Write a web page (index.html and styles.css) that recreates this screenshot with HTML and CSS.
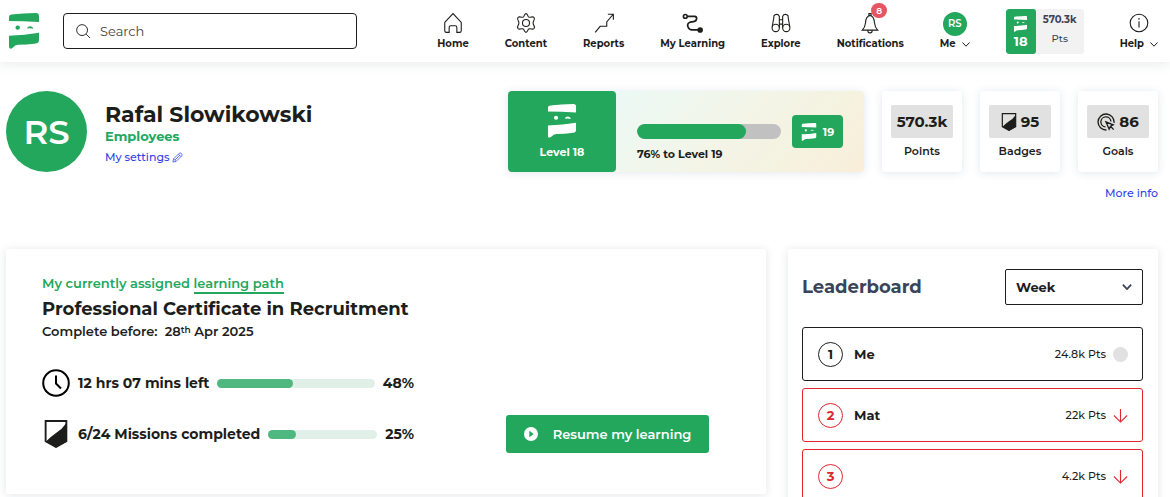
FILE: index.html
```html
<!DOCTYPE html>
<html lang="en">
<head>
<meta charset="utf-8">
<meta name="viewport" content="width=device-width, initial-scale=1">
<title>Learning dashboard</title>
<link rel="stylesheet" href="styles.css">
</head>
<body>
<svg class="defs" aria-hidden="true">
  <symbol id="face" viewBox="0 0 30 36">
    <path d="M0 8V4Q0 1.800 2.500 1.500Q14 .2 27 .1Q30 .1 30 3V9Q14 8 0 8Z"/>
    <circle cx="8.700" cy="14.600" r="2.200"/>
    <path d="M18 15.600Q18.500 13.300 21.300 13.300Q24 13.400 24.300 15.800Q21 14.800 18 15.600Z"/>
    <path d="M0 22.700Q16 22.200 30 19.800V27Q30 30 27 30.500Q18 31.800 9 31.800Q6 32 4 34.500Q0 37.500 0 33Z"/>
  </symbol>
  <symbol id="shield" viewBox="0 0 22 27">
    <path d="M1 1H21V20.500L11 26L1 20.500Z" fill="none" stroke="currentColor" stroke-width="1.800"/>
    <path d="M21 3V21L11 26.500L1 21Q6 16 11 12.500Q17 9 21 3Z" fill="currentColor"/>
  </symbol>
  <symbol id="chevron" viewBox="0 0 8 5">
    <path d="M.5 .5L4 4.200L7.500 .5" fill="none" stroke="currentColor"/>
  </symbol>
  <symbol id="down" viewBox="0 0 16 16">
    <path d="M8 1V15M1 8L8 15L15 8" fill="none" stroke="currentColor" stroke-width="1.200"/>
  </symbol>
</svg>

<header class="topbar">
  <a class="logo" href="#" aria-label="Home page"><svg viewBox="0 0 30 36"><use href="#face"/></svg></a>
  <label class="search">
    <svg viewBox="0 0 16 16"><circle cx="6.500" cy="6.500" r="5.800"/><path d="M10.800 10.800L15 15"/></svg>
    <input type="search" placeholder="Search" aria-label="Search">
  </label>
  <nav class="nav">
    <a class="nav-item" href="#">
      <svg class="nav-icon" viewBox="0 0 20 20"><path d="M2.500 9.500L10 1.500L17.500 9.500V17Q17.500 18.500 16 18.500H13.500V14Q13.500 12.500 12 12.500H8Q6.500 12.500 6.500 14V18.500H4Q2.500 18.500 2.500 17Z"/></svg>
      <span>Home</span>
    </a>
    <a class="nav-item" href="#">
      <svg class="nav-icon" viewBox="0 0 20 20"><path d="M10 1.500Q11 1.500 12 4Q12.500 5 14 4.700Q16.500 4 17.300 5Q18.300 6.500 16.800 8.500Q16 10 16.800 11.500Q18.300 13.500 17.300 15Q16.500 16 14 15.300Q12.500 15 12 16Q11 18.500 10 18.500Q9 18.500 8 16Q7.500 15 6 15.300Q3.500 16 2.700 15Q1.700 13.500 3.200 11.500Q4 10 3.200 8.500Q1.700 6.500 2.700 5Q3.500 4 6 4.700Q7.500 5 8 4Q9 1.500 10 1.500Z"/><circle cx="10" cy="10" r="3.200"/></svg>
      <span>Content</span>
    </a>
    <a class="nav-item" href="#">
      <svg class="nav-icon" viewBox="0 0 20 20"><path d="M2 18.500L6.500 13H12.500V9L18 2.500M13.500 2H18.500V7"/></svg>
      <span>Reports</span>
    </a>
    <a class="nav-item" href="#">
      <svg class="nav-icon nav-icon-bold" viewBox="0 0 20 20"><circle cx="3" cy="4" r="1.700"/><path d="M5 4H11.500Q13.500 4.300 13.300 6Q13 8.500 10.500 8.700Q7 9 6 10Q4.500 11.500 5.500 13.700Q6.500 16.300 9 16.300H15"/><circle class="filled" cx="16.500" cy="16.300" r="1.800"/></svg>
      <span>My Learning</span>
    </a>
    <a class="nav-item" href="#">
      <svg class="nav-icon" viewBox="0 0 20 20"><path d="M2 13.500L3.500 5V3.500Q5 1.500 7.500 2.500L8.500 4V14M18 13.500L16.500 5V3.500Q15 1.500 12.500 2.500L11.500 4V14M8.500 7H11.500M8.500 11H11.500"/><circle cx="5.200" cy="14.500" r="3.300"/><circle cx="14.800" cy="14.500" r="3.300"/></svg>
      <span>Explore</span>
    </a>
    <a class="nav-item" href="#">
      <span class="bell">
        <svg class="nav-icon" viewBox="0 0 20 20"><path d="M3 16.500Q5.500 14 6 9.500Q6.200 4 10 3.200Q13.800 4 14 9.500Q14.500 14 17 16.500ZM8 16.500Q8 19 10 19Q12 19 12 16.500M9 3.200V1.500H11V3.200"/></svg>
        <span class="count">8</span>
      </span>
      <span>Notifications</span>
    </a>
    <button class="nav-item" type="button">
      <span class="avatar avatar-small">RS</span>
      <span class="with-chevron">Me <svg class="chevron"><use href="#chevron"/></svg></span>
    </button>
    <a class="score" href="#">
      <span class="score-level"><svg viewBox="0 0 30 36"><use href="#face"/></svg>18</span>
      <span class="score-points"><strong>570.3k</strong><span>Pts</span></span>
    </a>
    <button class="nav-item" type="button">
      <svg class="nav-icon" viewBox="0 0 20 20"><circle cx="10" cy="10" r="8"/><path d="M10 8.500V14M10 5.500V7"/></svg>
      <span class="with-chevron">Help <svg class="chevron"><use href="#chevron"/></svg></span>
    </button>
  </nav>
</header>

<main class="page">
  <section class="profile">
    <span class="avatar avatar-large">RS</span>
    <div class="identity">
      <h1>Rafal Slowikowski</h1>
      <p class="group">Employees</p>
      <a class="link" href="#">My settings
        <svg class="pencil" viewBox="0 0 12 12"><path d="M1 11L1.700 7.500L7.800 1.400Q9 .5 10.300 1.700Q11.500 3 10.600 4.200L4.500 10.300ZM7 2.300L9.700 5M1.700 7.500L4.500 10.300M3.200 8.800L8.400 3.600"/></svg>
      </a>
    </div>
    <div class="level">
      <div class="level-badge"><svg viewBox="0 0 30 36"><use href="#face"/></svg>Level 18</div>
      <div class="level-progress">
        <div class="level-meter">
          <div class="track"><div class="bar" style="width:76%"></div></div>
          <p>76% to Level 19</p>
        </div>
        <div class="next-level"><svg viewBox="0 0 30 36"><use href="#face"/></svg>19</div>
      </div>
    </div>
    <div class="stat"><div class="stat-value">570.3k</div><span>Points</span></div>
    <div class="stat"><div class="stat-value"><svg class="stat-shield"><use href="#shield"/></svg>95</div><span>Badges</span></div>
    <div class="stat"><div class="stat-value"><svg class="stat-goal" viewBox="0 0 20 20"><path d="M10.500 18.900A8.900 8.900 0 1 1 18.900 11M9.500 15.500A5.600 5.600 0 1 1 15.500 9.500"/><path d="M10 10L18 13.200L15 14.700L13.500 18ZM15 14.700L18.500 18.500"/></svg>86</div><span>Goals</span></div>
  </section>
  <div class="more"><a class="link" href="#">More info</a></div>

  <div class="panels">
    <section class="panel path">
      <p class="path-label">My currently assigned <a href="#">learning path</a></p>
      <h2>Professional Certificate in Recruitment</h2>
      <p class="deadline">Complete before:&nbsp; 28<sup>th</sup> Apr 2025</p>
      <div class="path-body">
        <div class="metrics">
          <div class="metric">
            <svg class="metric-icon" viewBox="0 0 28 28"><circle cx="14" cy="14" r="12.800"/><path d="M14 6.500V14.500L19 19.500"/></svg>
            <span>12 hrs 07 mins left</span>
            <div class="mini-track"><div class="mini-bar" style="width:48%"></div></div>
            <span>48%</span>
          </div>
          <div class="metric">
            <svg class="metric-icon metric-shield"><use href="#shield"/></svg>
            <span>6/24 Missions completed</span>
            <div class="mini-track"><div class="mini-bar" style="width:25%"></div></div>
            <span>25%</span>
          </div>
        </div>
        <button class="resume" type="button">
          <svg viewBox="0 0 14 14"><circle cx="7" cy="7" r="7" fill="#fff"/><path d="M5.300 3.800L9.700 7L5.300 10.200Z" fill="#22a75d"/></svg>
          Resume my learning
        </button>
      </div>
    </section>

    <section class="panel board">
      <div class="board-head">
        <h2>Leaderboard</h2>
        <div class="period">
          <select aria-label="Period"><option>Week</option><option>Month</option></select>
          <svg viewBox="0 0 8 5"><use href="#chevron"/></svg>
        </div>
      </div>
      <ol class="ranks">
        <li class="rank"><span class="place">1</span><strong>Me</strong><span class="points">24.8k Pts</span><span class="steady"></span></li>
        <li class="rank falling"><span class="place">2</span><strong>Mat</strong><span class="points">22k Pts</span><svg class="trend"><use href="#down"/></svg></li>
        <li class="rank falling"><span class="place">3</span><span class="points">4.2k Pts</span><svg class="trend"><use href="#down"/></svg></li>
      </ol>
    </section>
  </div>
</main>
</body>
</html>
```
FILE: styles.css
```css
* { box-sizing: border-box; }

:root {
  --green: #22a75d;
  --ink: #1d1d1b;
  --slate: #3a4458;
  --red: #e0262d;
  --link: #2f42ea;
}

html { overflow: hidden; }

body {
  margin: 0;
  background: #fff;
  color: var(--ink);
  font-family: Montserrat, Inter, sans-serif;
  font-size: 13px;
}

h1, h2, p, ol { margin: 0; padding: 0; }
a { color: inherit; text-decoration: none; }
button, input, select { font: inherit; color: inherit; }
svg { flex: none; }
.defs { display: none; }

.topbar {
  display: flex;
  align-items: center;
  height: 62px;
  padding: 0 12px 0 9px;
  box-shadow: 0 3px 10px rgba(60, 80, 80, .1);
}
.logo { display: flex; margin-right: 24px; color: var(--green); }
.logo svg { width: 30px; height: 36px; fill: currentColor; }

.search {
  display: flex;
  align-items: center;
  gap: 9px;
  flex: 0 1 294px;
  height: 36px;
  padding: 0 12px;
  border: 1px solid var(--ink);
  border-radius: 4px;
}
.search svg { width: 15px; height: 15px; fill: none; stroke: var(--ink); }
.search input {
  flex: 1;
  min-width: 0;
  padding: 0;
  border: 0;
  outline: 0;
  background: none;
}
.search input::placeholder { color: #444; opacity: 1; }

.nav {
  display: flex;
  align-items: center;
  gap: 36px;
  margin-left: auto;
}
.nav-item {
  display: flex;
  flex-direction: column;
  align-items: center;
  justify-content: space-between;
  height: 38px;
  padding: 0;
  border: 0;
  background: none;
  font-size: 10px;
  font-weight: 700;
  line-height: 12px;
  white-space: nowrap;
}
.nav-icon { display: block; width: 22px; height: 22px; fill: none; stroke: var(--ink); }
.nav-icon-bold { stroke-width: 1.5; }
.nav-icon .filled { fill: var(--ink); }
.bell { position: relative; }
.count {
  position: absolute;
  top: -9px;
  left: 12px;
  width: 16px;
  height: 15px;
  border-radius: 8px;
  background: #e55563;
  color: #fff;
  font-size: 9px;
  font-weight: 600;
  line-height: 15px;
  text-align: center;
}
.with-chevron { display: flex; align-items: center; gap: 6px; }
.chevron { width: 8px; height: 5px; }

.avatar {
  display: flex;
  align-items: center;
  justify-content: center;
  flex: none;
  border-radius: 50%;
  background: var(--green);
  color: #fff;
  font-weight: 600;
}
.avatar-small { width: 24px; height: 24px; font-size: 10px; }
.avatar-large { width: 81px; height: 81px; font-size: 34px; }

.score { display: flex; height: 45px; border-radius: 3px; background: #f2f2f2; overflow: hidden; }
.score-level {
  display: flex;
  flex-direction: column;
  align-items: center;
  gap: 1px;
  width: 30px;
  padding-top: 7px;
  border-radius: 3px;
  background: var(--green);
  color: #fff;
  font-weight: 700;
  line-height: 16px;
}
.score-level svg { width: 15px; height: 16px; fill: #fff; }
.score-points {
  display: flex;
  flex-direction: column;
  align-items: center;
  gap: 7px;
  width: 48px;
  padding-top: 5px;
  color: var(--slate);
  font-size: 10px;
  font-weight: 500;
  line-height: 12px;
}

.page { padding: 29px 12px 0 6px; }

.profile { display: flex; gap: 18px; }
.identity { flex: 1; padding-top: 10px; white-space: nowrap; }
.identity h1 { font-size: 22px; font-weight: 700; line-height: 27px; }
.group { color: var(--green); font-weight: 700; line-height: 17px; }
.link { color: var(--link); font-size: 11px; font-weight: 500; }
.identity .link { display: flex; align-items: center; gap: 3px; line-height: 24px; }
.pencil { width: 11px; height: 11px; fill: none; stroke: currentColor; stroke-width: .8; }

.level {
  display: flex;
  flex: 0 1 356px;
  border-radius: 4px;
  box-shadow: 0 1px 8px rgba(60, 80, 130, .14);
  font-size: 11px;
  font-weight: 700;
}
.level-badge {
  display: flex;
  flex-direction: column;
  align-items: center;
  gap: 6px;
  width: 108px;
  padding-top: 13px;
  border-radius: 4px;
  background: var(--green);
  color: #fff;
  line-height: 16px;
}
.level-badge svg { width: 30px; height: 34px; fill: #fff; }
.level-progress {
  display: flex;
  align-items: center;
  gap: 11px;
  flex: 1;
  padding: 0 21px;
  border-radius: 4px;
  background: linear-gradient(135deg, #ebf9f5, #f3f5e8 45%, #f5f2df 75%, #f9eed9);
}
.level-meter { flex: 1; padding-top: 22px; }
.track { height: 15px; border-radius: 8px; background: #c1c1c1; overflow: hidden; }
.bar { height: 100%; border-radius: 8px; background: var(--green); }
.level-meter p { margin-top: 8px; line-height: 14px; }
.next-level {
  display: flex;
  align-items: center;
  justify-content: center;
  gap: 6px;
  width: 51px;
  height: 33px;
  border-radius: 4px;
  background: var(--green);
  color: #fff;
}
.next-level svg { width: 16px; height: 18px; fill: #fff; }

.stat {
  flex: 0 0 80px;
  padding: 14px 9px 0;
  border-radius: 4px;
  box-shadow: 0 1px 8px rgba(60, 80, 130, .14);
  font-size: 11px;
  font-weight: 600;
  line-height: 26px;
  text-align: center;
}
.stat-value {
  display: flex;
  align-items: center;
  justify-content: center;
  gap: 4px;
  height: 33px;
  border-radius: 2px;
  background: #e1e1e1;
  font-size: 15px;
  font-weight: 700;
}
.stat-shield { width: 16px; height: 18px; }
.stat-goal { width: 18px; height: 18px; fill: none; stroke: var(--ink); stroke-width: 1.5; }
.more { display: flex; justify-content: flex-end; line-height: 16px; padding-top: 13px; }

.panels {
  display: grid;
  grid-template-columns: 760fr 370fr;
  gap: 22px;
  align-items: start;
  margin-top: 48px;
}
.panel { box-shadow: 0 1px 8px rgba(60, 70, 100, .14); border-radius: 2px; background: #fff; }
.path { padding: 24px 36px 41px; }
.path-label { color: var(--green); font-weight: 600; line-height: 20px; }
.path-label a { border-bottom: 2px solid; padding-bottom: 1px; }
.path h2 { font-size: 18px; font-weight: 700; line-height: 32px; }
.deadline { font-size: 13px; font-weight: 600; line-height: 12px; }
.deadline sup { font-size: 9px; line-height: 0; vertical-align: 3px; }
.path-body { display: flex; justify-content: space-between; align-items: flex-end; padding: 32px 21px 0 0; }
.metrics {
  display: flex;
  flex-direction: column;
  gap: 23px;
  flex: 0 1 372px;
  padding-bottom: 5px;
}
.metric {
  display: flex;
  align-items: center;
  gap: 8px;
  height: 28px;
  font-size: 14px;
  font-weight: 700;
  white-space: nowrap;
}
.metric-icon { width: 28px; height: 28px; fill: none; stroke: #000; stroke-width: 2; }
.metric-shield { stroke: none; }
.mini-track { flex: 1; height: 9px; border-radius: 5px; background: #e0f0e8; }
.mini-bar { height: 100%; border-radius: 5px; background: #4fb880; }
.resume {
  display: flex;
  align-items: center;
  justify-content: center;
  gap: 15px;
  width: 203px;
  height: 38px;
  padding: 0;
  border: 0;
  border-radius: 3px;
  background: var(--green);
  color: #fff;
  font-weight: 600;
}
.resume svg { width: 14px; height: 14px; }

.board { padding: 20px 15px 20px 14px; }
.board-head { display: flex; align-items: center; justify-content: space-between; margin-bottom: 22px; }
.board h2 { color: var(--slate); font-size: 18px; font-weight: 700; }
.period { display: grid; align-items: center; width: 138px; }
.period select {
  grid-area: 1 / 1;
  appearance: none;
  height: 36px;
  padding: 0 10px;
  border: 1px solid var(--ink);
  border-radius: 2px;
  background: #fff;
  font-weight: 700;
}
.period svg {
  grid-area: 1 / 1;
  justify-self: end;
  width: 10px;
  height: 6px;
  margin-right: 11px;
  color: var(--slate);
  stroke-width: 1.5;
  pointer-events: none;
}
.ranks { display: flex; flex-direction: column; gap: 7px; list-style: none; }
.rank {
  display: flex;
  align-items: center;
  gap: 7px;
  height: 54px;
  padding: 0 14px 0 15px;
  border: 1px solid var(--ink);
  border-radius: 3px;
}
.falling { border-color: var(--red); }
.place {
  display: flex;
  align-items: center;
  justify-content: center;
  width: 25px;
  height: 25px;
  margin-right: 4px;
  border: 1px solid;
  border-radius: 50%;
  font-weight: 700;
}
.falling .place { color: var(--red); }
.points { margin-left: auto; font-size: 11px; font-weight: 500; }
.steady { width: 15px; height: 15px; border-radius: 50%; background: #e1e1e1; }
.trend { width: 15px; height: 15px; color: var(--red); }
```
